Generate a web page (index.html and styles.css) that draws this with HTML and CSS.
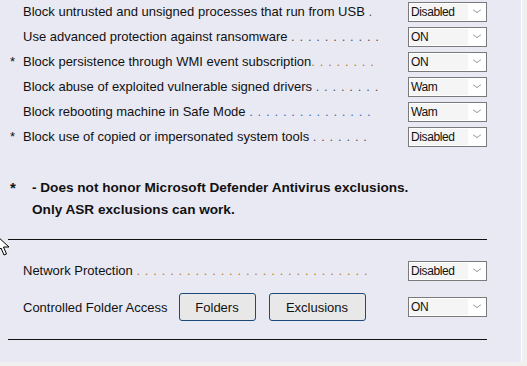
FILE: index.html
```html
<!DOCTYPE html>
<html lang="en">
<head>
    <meta charset="UTF-8">
    <title>ASR Rules</title>
    <link rel="stylesheet" href="styles.css">
</head>
<body>
    <div class="panel">
        <div class="rules">
            <div class="row">
                <span class="star"></span>
                <span class="label">Block untrusted and unsigned processes that run from USB <span class="dots">.</span></span>
                <div class="combo"><span class="value">Disabled</span><span class="arrow"></span></div>
            </div>
            <div class="row">
                <span class="star"></span>
                <span class="label">Use advanced protection against ransomware <span class="dots">. . . . . . . . . . .</span></span>
                <div class="combo"><span class="value">ON</span><span class="arrow"></span></div>
            </div>
            <div class="row">
                <span class="star">*</span>
                <span class="label">Block persistence through WMI event subscription<span class="dots orange">. . . . . . . .</span></span>
                <div class="combo"><span class="value">ON</span><span class="arrow"></span></div>
            </div>
            <div class="row">
                <span class="star"></span>
                <span class="label">Block abuse of exploited vulnerable signed drivers <span class="dots">. . . . . . . .</span></span>
                <div class="combo"><span class="value">Wam</span><span class="arrow"></span></div>
            </div>
            <div class="row">
                <span class="star"></span>
                <span class="label">Block rebooting machine in Safe Mode <span class="dots blue">. . . . . . . . . . . . . . .</span></span>
                <div class="combo"><span class="value">Wam</span><span class="arrow"></span></div>
            </div>
            <div class="row">
                <span class="star">*</span>
                <span class="label">Block use of copied or impersonated system tools <span class="dots">. . . . . . .</span></span>
                <div class="combo"><span class="value">Disabled</span><span class="arrow"></span></div>
            </div>
        </div>

        <div class="note">
            <span class="note-star">*</span>
            <div class="note-text">
                <div>- Does not honor Microsoft Defender Antivirus exclusions.</div>
                <div>Only ASR exclusions can work.</div>
            </div>
        </div>

        <div class="divider"></div>

        <div class="row net-row">
            <span class="star"></span>
            <span class="label">Network Protection <span class="dots orange">. . . . . . . . . . . . . . . . . . . . . . . . . . . .</span></span>
            <div class="combo"><span class="value">Disabled</span><span class="arrow"></span></div>
        </div>
        <div class="row cfa-row">
            <span class="star"></span>
            <div class="label cfa-label">
                <span>Controlled Folder Access</span>
                <button class="btn btn-folders">Folders</button>
                <button class="btn btn-exclusions">Exclusions</button>
            </div>
            <div class="combo"><span class="value">ON</span><span class="arrow"></span></div>
        </div>

        <div class="divider bottom"></div>

        <svg class="cursor" width="16" height="22" viewBox="0 0 16 22">
            <path d="M1 1 L1 17 L5 13 L8 20 L10.5 19 L7.5 12 L13 12 Z" fill="#fff" stroke="#000" stroke-width="1"/>
        </svg>
    </div>
</body>
</html>
```

FILE: styles.css
```css
body {
    margin: 0;
    background-color: #f0f0f0;
    font-family: "Liberation Sans", Arial, sans-serif;
    font-size: 13px;
    color: #111;
}

.panel {
    position: relative;
    width: 521px;
    height: 362px;
    background-color: #e9e9f3;
    border-right: 1px solid #fff;
    overflow: hidden;
}

.rules {
    margin-top: -1px;
}

.row {
    display: flex;
    align-items: center;
    height: 25px;
}

.star {
    width: 23px;
    box-sizing: border-box;
    padding-left: 10px;
    flex-shrink: 0;
}

.label {
    width: 385px;
    flex-shrink: 0;
    white-space: nowrap;
}

.dots {
    color: #555;
    letter-spacing: 0.6px;
}

.dots.orange {
    color: #c07a1a;
}

.dots.blue {
    color: #3a6fc4;
}

.combo {
    display: flex;
    width: 77px;
    height: 18px;
    border: 1px solid #7a7a7a;
    background-color: #fff;
    font-size: 12px;
    letter-spacing: -0.4px;
}

.combo .value {
    width: 57px;
    margin: 1px 0 1px 1px;
    padding-left: 1px;
    background-color: #f5f5f5;
    line-height: 16px;
}

.combo .arrow {
    flex: 1;
    position: relative;
}

.combo .arrow::after {
    content: "";
    position: absolute;
    left: 6px;
    top: 4px;
    width: 5px;
    height: 5px;
    border-right: 1px solid #999;
    border-bottom: 1px solid #999;
    transform: scaleY(0.7) rotate(45deg);
}

.note {
    display: flex;
    margin-top: 28px;
    font-size: 13.6px;
    font-weight: bold;
    line-height: 22px;
}

.note-star {
    width: 23px;
    box-sizing: border-box;
    padding-left: 10px;
    font-size: 15px;
}

.note-text {
    padding-left: 9px;
}

.divider {
    margin: 18px 0 0 8px;
    width: 479px;
    height: 1px;
    background-color: #111;
}

.divider.bottom {
    margin-top: 19px;
}

.net-row {
    margin-top: 18px;
}

.cfa-row {
    margin-top: 10px;
    height: 28px;
}

.cfa-label {
    display: flex;
    align-items: center;
}

.btn {
    height: 28px;
    margin-left: 11px;
    border: 1px solid #1c4a7a;
    border-radius: 3px;
    background-color: #e8e8e8;
    font-family: "Liberation Sans", Arial, sans-serif;
    font-size: 13px;
    color: #111;
    padding: 0;
}

.btn-folders {
    width: 77px;
}

.btn-exclusions {
    width: 97px;
    margin-left: 13px;
}

.divider.bottom {
    margin-top: 18px;
}

.cursor {
    position: absolute;
    left: -4px;
    top: 235px;
}
```
